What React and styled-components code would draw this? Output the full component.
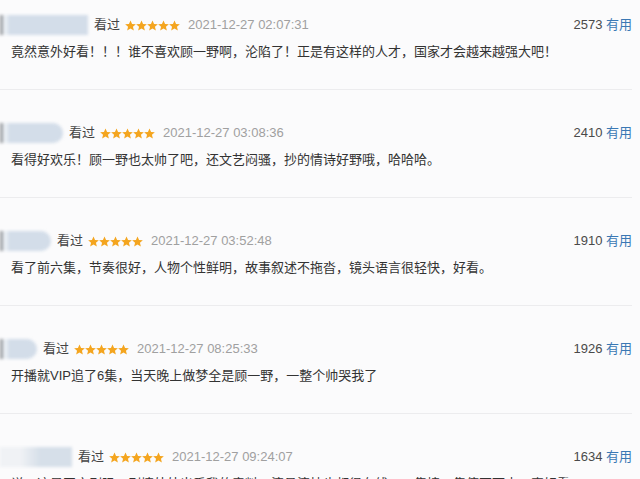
import React from "react";
import styled, { createGlobalStyle } from "styled-components";

const GlobalStyle = createGlobalStyle`
  html, body {
    margin: 0;
    padding: 0;
    background: #fbfbfc;
    overflow: hidden;
  }
  body {
    font-family: "Liberation Sans", "Noto Sans CJK SC", sans-serif;
  }
`;

const comments = [
  {
    user: 88,
    round: false,
    edge: true,
    date: "2021-12-27 02:07:31",
    votes: 2573,
    text: "竟然意外好看！！！谁不喜欢顾一野啊，沦陷了！正是有这样的人才，国家才会越来越强大吧！",
  },
  {
    user: 63,
    round: true,
    edge: true,
    date: "2021-12-27 03:08:36",
    votes: 2410,
    text: "看得好欢乐！顾一野也太帅了吧，还文艺闷骚，抄的情诗好野哦，哈哈哈。",
  },
  {
    user: 51,
    round: true,
    edge: true,
    date: "2021-12-27 03:52:48",
    votes: 1910,
    text: "看了前六集，节奏很好，人物个性鲜明，故事叙述不拖沓，镜头语言很轻快，好看。",
  },
  {
    user: 37,
    round: true,
    edge: true,
    date: "2021-12-27 08:25:33",
    votes: 1926,
    text: "开播就VIP追了6集，当天晚上做梦全是顾一野，一整个帅哭我了",
  },
  {
    user: 72,
    round: false,
    edge: false,
    date: "2021-12-27 09:24:07",
    votes: 1634,
    text: "说，这是国产剧吗，剧情处处出乎我的意料，演员演技也都很在线，一集接一集停不下来，真好看。",
  },
];

const Star = () => (
  <svg width="11" height="11" viewBox="1 1.2 22 21">
    <path
      d="M12 1.5l3.1 7 7.6.7-5.8 5 1.8 7.5L12 17.8l-6.7 3.9 1.8-7.5-5.8-5 7.6-.7z"
      fill="#f4a51f"
    />
  </svg>
);

const App = () => (
  <>
    <GlobalStyle />
    <List>
      {comments.map((c) => (
        <Item key={c.date}>
          <Header>
            <User $width={c.user} $round={c.round} $edge={c.edge} />
            <Watched>看过</Watched>
            <Stars>
              {[0, 1, 2, 3, 4].map((i) => (
                <Star key={i} />
              ))}
            </Stars>
            <Time>{c.date}</Time>
            <Votes>
              {c.votes} <Useful>有用</Useful>
            </Votes>
          </Header>
          <Content>{c.text}</Content>
        </Item>
      ))}
    </List>
  </>
);

const List = styled.div`
  display: flex;
  flex-direction: column;
  padding-right: 8px;
`;

const Item = styled.div`
  display: flex;
  flex-direction: column;
  padding: 34px 0 27px;
  border-bottom: 1px solid #ececee;

  &:first-child {
    padding-top: 16px;
  }
`;

const Header = styled.div`
  display: flex;
  align-items: center;
  height: 18px;
  font-size: 13px;
  line-height: 18px;
`;

const User = styled.div`
  width: ${(p) => p.$width}px;
  height: 20px;
  margin-right: 6px;
  border-radius: ${(p) => (p.$round ? "0 12px 12px 0" : "0")};
  background: ${(p) =>
    p.$edge
      ? "linear-gradient(to right, #9c9fa3 0 3px, #e8edf3 3px 8px, #d3dde9 8px)"
      : "linear-gradient(to right, #f0f2f5 0 20px, #d6dfe9 40px)"};
  filter: blur(1.5px);
  flex-shrink: 0;
`;

const Watched = styled.span`
  color: #444;
  margin-right: 5px;
`;

const Stars = styled.span`
  display: flex;
  align-items: center;
  margin-right: 8px;
`;

const Time = styled.span`
  color: #a0a0a0;
`;

const Votes = styled.span`
  margin-left: auto;
  color: #4a4a4a;
`;

const Useful = styled.span`
  color: #3a78b4;
`;

const Content = styled.div`
  margin: 8px 0 0 11px;
  font-size: 13px;
  line-height: 20px;
  color: #333;
  white-space: nowrap;
`;

export default App;
